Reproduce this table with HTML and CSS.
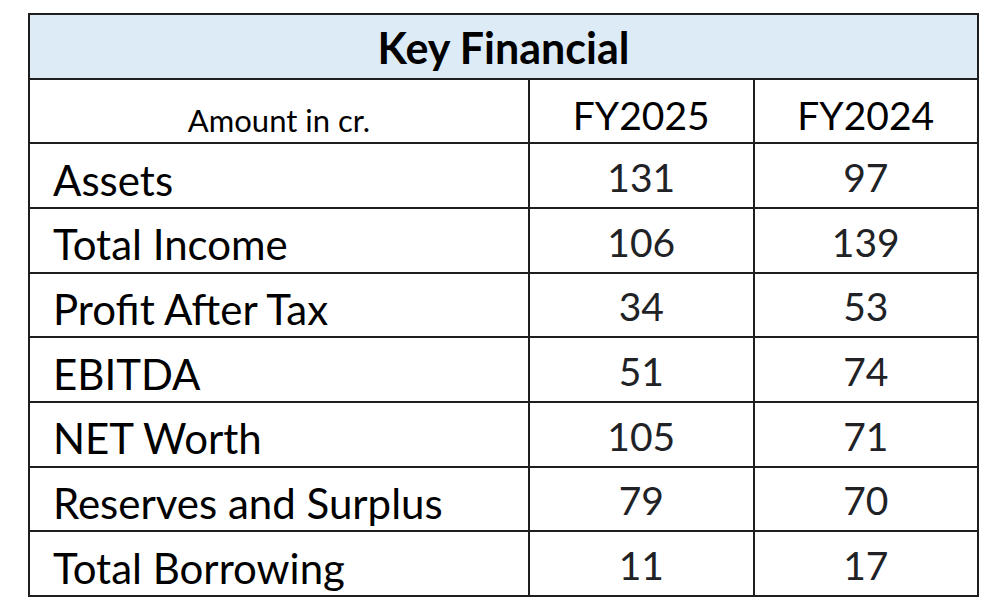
FILE: index.html
```html
<!DOCTYPE html>
<html lang="en">
<head>
<meta charset="utf-8">
<title>Key Financial</title>
<link rel="stylesheet" href="styles.css">
</head>
<body>
<div class="sheet">
  <div class="fin-table">
    <div class="cell title">Key Financial</div>

    <div class="cell head unit">Amount in cr.</div>
    <div class="cell head year">FY2025</div>
    <div class="cell head year">FY2024</div>

    <div class="cell label">Assets</div>
    <div class="cell num">131</div>
    <div class="cell num">97</div>

    <div class="cell label">Total Income</div>
    <div class="cell num">106</div>
    <div class="cell num">139</div>

    <div class="cell label">Profit After Tax</div>
    <div class="cell num">34</div>
    <div class="cell num">53</div>

    <div class="cell label">EBITDA</div>
    <div class="cell num">51</div>
    <div class="cell num">74</div>

    <div class="cell label">NET Worth</div>
    <div class="cell num">105</div>
    <div class="cell num">71</div>

    <div class="cell label">Reserves and Surplus</div>
    <div class="cell num">79</div>
    <div class="cell num">70</div>

    <div class="cell label">Total Borrowing</div>
    <div class="cell num">11</div>
    <div class="cell num">17</div>
  </div>
</div>
</body>
</html>
```

FILE: styles.css
```css
html, body {
  margin: 0;
  padding: 0;
  background: #ffffff;
}

.sheet {
  padding: 13px 0 0 28px;
}

.fin-table {
  box-sizing: border-box;
  width: 951px;
  height: 584px;
  display: grid;
  grid-template-columns: 498px 1fr 1fr;
  grid-template-rows: repeat(9, 1fr);
  gap: 2px;
  padding: 2px;
  background: #1e1e1e;
  font-family: Lato, "Open Sans", "Liberation Sans", sans-serif;
  color: #000;
}

.cell {
  background: #ffffff;
  display: flex;
  align-items: center;
  font-size: 42px;
  line-height: 1;
  white-space: nowrap;
}

.title {
  grid-column: 1 / 4;
  background: #ddebf7;
  justify-content: center;
  font-weight: 700;
  font-size: 43px;
  padding-top: 3px;
}

.head {
  justify-content: center;
  align-items: flex-end;
  padding-bottom: 7px;
}

.year {
  font-size: 39px;
}

.unit {
  font-size: 31px;
  padding-bottom: 6px;
}

.label {
  padding-left: 23px;
  padding-top: 8px;
}

.num {
  justify-content: center;
  color: #202226;
  font-size: 39px;
  padding-top: 4px;
}
```
